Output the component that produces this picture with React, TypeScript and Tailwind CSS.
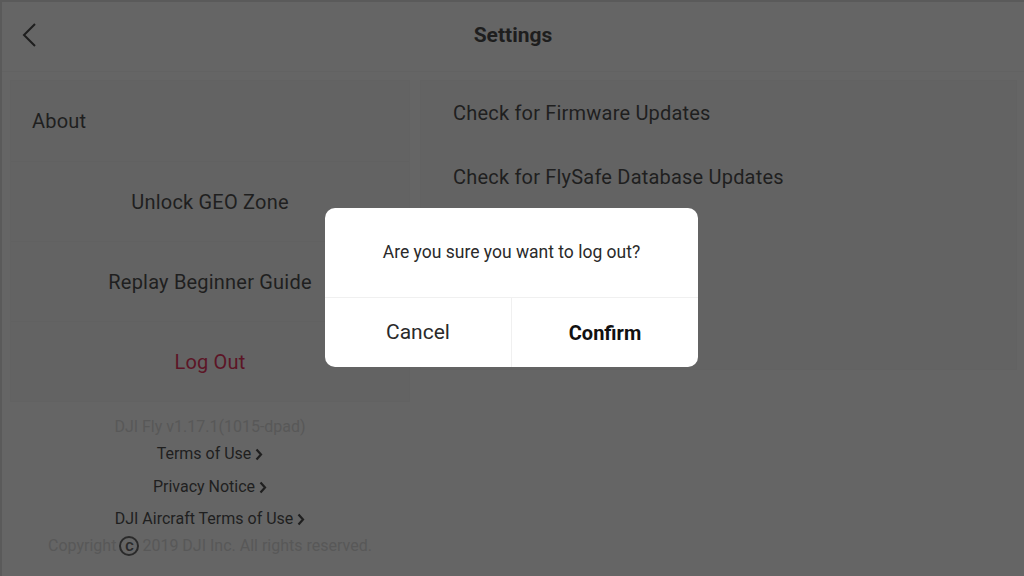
import React from "react";

const font = { fontFamily: "Roboto, 'Noto Sans', sans-serif" };

function LinkRow({ label }: { label: string }) {
  return (
    <div className="flex h-5 items-center justify-center gap-[4px] text-[16px] leading-5 text-[#1f1f1f]">
      <span>{label}</span>
      <svg width="8" height="13" viewBox="0 0 8 13" className="mt-px">
        <polyline
          points="1.5,1.5 6,6.5 1.5,11.5"
          fill="none"
          stroke="#1f1f1f"
          strokeWidth="2.2"
        />
      </svg>
    </div>
  );
}

export default function App() {
  return (
    <div
      className="relative h-[576px] w-[1024px] overflow-hidden border-l-2 border-t-2 border-[#5a5a5a] bg-[#656565]"
      style={font}
    >
      {/* header */}
      <div className="relative flex h-[70px] items-center justify-center border-b border-[#626262]">
        <button className="absolute left-[19px] top-[20px] p-0">
          <svg width="18" height="28" viewBox="0 0 18 28">
            <polyline
              points="14,2 3,13 14,24"
              fill="none"
              stroke="#1e1e1e"
              strokeWidth="2"
            />
          </svg>
        </button>
        <h1 className="mt-[-2px] text-[21px] font-bold text-[#1e1e1e]">Settings</h1>
      </div>

      <div className="flex gap-[10px] pl-2 pr-[7px] pt-2">
        {/* left column */}
        <div className="flex w-[400px] flex-col">
          <div className="flex flex-col border border-[#626262] bg-[#636363] text-[20px] tracking-[0.2px] text-[#1f1f1f]">
            <div className="flex h-20 items-center pl-[21px]">About</div>
            <div className="flex h-20 items-center justify-center border-t border-[#616161]">
              Unlock GEO Zone
            </div>
            <div className="flex h-20 items-center justify-center border-t border-[#616161]">
              Replay Beginner Guide
            </div>
            <div className="flex h-20 items-center justify-center border-t border-[#616161] text-[#5c1526]">
              Log Out
            </div>
          </div>

          <div className="mt-[15px] flex flex-col items-center">
            <div className="h-5 text-[16px] leading-5 text-[#585858]">DJI Fly v1.17.1(1015-dpad)</div>
            <div className="mt-[7px]">
              <LinkRow label="Terms of Use" />
            </div>
            <div className="mt-[13px]">
              <LinkRow label="Privacy Notice" />
            </div>
            <div className="mt-3">
              <LinkRow label="DJI Aircraft Terms of Use" />
            </div>
            <div className="mt-[7px] flex h-5 items-center gap-[3px] text-[16px] leading-5 text-[#585858]">
              <span>Copyright</span>
              <span className="flex h-[20px] w-[20px] items-center justify-center rounded-full border-2 border-[#2a2a2a] text-[13px] font-bold leading-none text-[#2a2a2a]">
                C
              </span>
              <span>2019 DJI Inc. All rights reserved.</span>
            </div>
          </div>
        </div>

        {/* right column */}
        <div className="flex h-[290px] flex-1 flex-col border border-[#626262] bg-[#636363] pl-[32px] text-[20px] tracking-[0.2px] text-[#1f1f1f]">
          <div className="flex h-16 items-center">Check for Firmware Updates</div>
          <div className="flex h-16 items-center">Check for FlySafe Database Updates</div>
        </div>
      </div>

      {/* dialog */}
      <div className="absolute left-[323px] top-[206px] flex h-[159px] w-[373px] flex-col rounded-[10px] bg-white">
        <div className="flex h-[89px] items-center justify-center text-[17.5px] text-[#2a2a2a]">
          Are you sure you want to log out?
        </div>
        <div className="flex flex-1 border-t border-[#f0f0f0]">
          <button className="flex flex-1 items-center justify-center text-[21px] text-[#2a2a2a]">
            Cancel
          </button>
          <button className="flex flex-1 items-center justify-center border-l border-[#f0f0f0] text-[20px] font-bold text-[#111]">
            Confirm
          </button>
        </div>
      </div>
    </div>
  );
}
